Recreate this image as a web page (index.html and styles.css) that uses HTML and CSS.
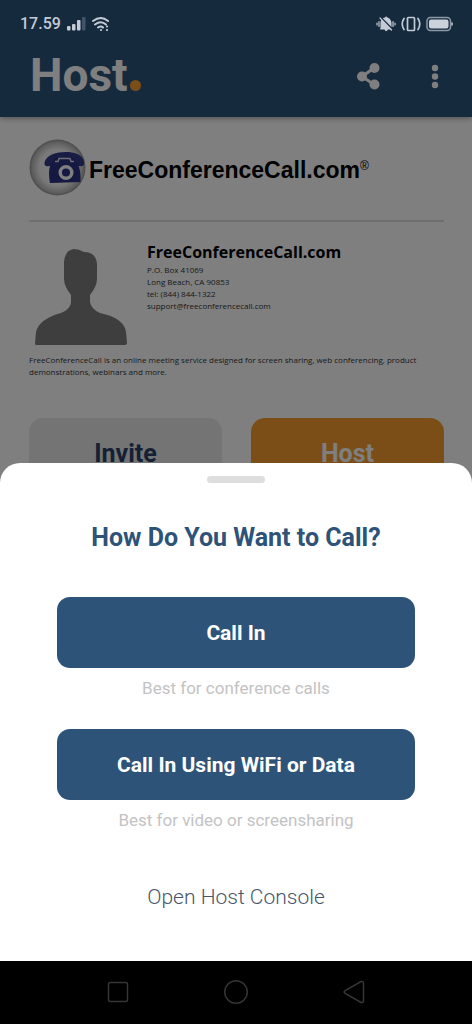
FILE: index.html
```html
<!DOCTYPE html>
<html lang="en">
<head>
<meta charset="utf-8">
<meta name="viewport" content="width=device-width, initial-scale=1">
<title>Host</title>
<link rel="stylesheet" href="styles.css">
</head>
<body>
<div class="stage">
  <div class="status">
    <div class="status-group">
      <span class="clock">17.59</span>
      <svg class="signal" width="20" height="14" viewBox="0 0 20 14" fill="#c3cbd6"><rect x="1" y="9" width="3.500" height="4.500" rx="1"/><rect x="6" y="7" width="3.500" height="6.500" rx="1"/><rect x="11" y="3" width="3.500" height="10.500" rx="1"/><rect x="16" y="0" width="3.500" height="13.500" rx="1" fill="#43546a"/></svg>
      <svg width="20" height="16" viewBox="0 0 20 16" fill="none" stroke="#c3cbd6" stroke-width="2" stroke-linecap="round"><path d="M2 5Q10-1 17 5M4 8.500Q10 4 15 8.500M7 11.500Q10 9.500 12 11.500"/><path d="M10 14h.01M16 10.500h.01M16 14h.01" stroke-width="2.200"/></svg>
    </div>
    <div class="status-group">
      <svg width="20" height="16" viewBox="0 0 20 16"><path d="M4.500 12V6.500Q5 2 9 1.500Q10-.5 11.500 1.500Q15 2.500 15.500 7v5l1 1.500H12Q10 17 8.500 13.500H4z" fill="#c3cbd6"/><path d="M5 1.500l12 12" stroke="#17293e" stroke-width="1.500"/><path d="M4 2l11.500 12M1 7v2M3 5.500v5M17 5.500v5M19 7v2" stroke="#c3cbd6" stroke-width="1.200" stroke-linecap="round"/></svg>
      <svg width="20" height="16" viewBox="0 0 20 16" fill="none" stroke="#c3cbd6" stroke-width="1.700" stroke-linecap="round"><rect x="6.500" y="1.500" width="7" height="13" rx="1"/><path d="M3 2.500Q-.5 8 3 13.500M17 2.500Q20.500 8 17 13.500"/></svg>
      <svg width="27" height="16" viewBox="0 0 27 16"><rect x="1" y="1.500" width="23.500" height="13" rx="3.500" fill="none" stroke="#8e99a8" stroke-width="1.500"/><rect x="3" y="3.500" width="19.500" height="9" rx="2" fill="#ccd2dc"/><path d="M26 6.500v3" stroke="#c3cbd6" stroke-width="1.500"/></svg>
    </div>
  </div>
  <main class="page">
    <header class="bar">
      <h1 class="bar-title">Host<span class="dot"></span></h1>
      <button class="icon-btn" type="button" aria-label="Share"><svg width="24" height="30" viewBox="0 0 24 30"><path d="M17 8L5 16.500l12 8" fill="none" stroke="#fff" stroke-width="3"/><circle cx="5" cy="16.500" r="5" fill="#fff"/><circle cx="17.500" cy="8" r="5" fill="#fff"/><circle cx="17.500" cy="24.500" r="5" fill="#fff"/></svg></button>
      <button class="icon-btn" type="button" aria-label="More options"><svg width="8" height="30" viewBox="0 0 8 30" fill="#fff"><circle cx="4" cy="8" r="3.200"/><circle cx="4" cy="16.500" r="3.200"/><circle cx="4" cy="25" r="3.200"/></svg></button>
    </header>
    <div class="content">
      <div class="brand">
        <svg width="58" height="58" viewBox="0 0 58 58">
          <defs><radialGradient id="orb" cx=".5" cy=".5" r=".5"><stop offset="0" stop-color="#fff"/><stop offset=".65" stop-color="#f2f2f2"/><stop offset=".9" stop-color="#bdbdbd"/><stop offset="1" stop-color="#959595"/></radialGradient></defs>
          <circle cx="28.500" cy="28.500" r="28" fill="url(#orb)"/>
          <path d="M15.500 23.500C18 14 33 12 43 13.500C52 15 56 20 55 26Q51.500 28.500 47 26L46 21H25.500L25 24Q22 28 17 27Q15 26 15.500 23.500Z" fill="#343a86"/>
          <path d="M25 19h20l3 6Q52 29 51.500 43L21 44Q19 33 21 27z" fill="#2b3180"/>
          <path d="M26 22.500H29L30 19.500H41L42 22.500H45" fill="none" stroke="#dcdce8" stroke-width="1.500" stroke-linejoin="round"/>
          <circle cx="37" cy="33.500" r="5.800" fill="#2b3180" stroke="#fff" stroke-width="3.500"/>
        </svg>
        <p class="brand-name">FreeConferenceCall.com<span class="reg">®</span></p>
      </div>
      <section class="profile">
        <svg class="avatar" width="94" height="98" viewBox="0 0 94 98"><path d="M40 1Q45 1 50 4Q62 4 63 16V31Q63 38 56 47V54Q57 61 66 65Q90 70 92 84L93 95Q93 97 91 97H2Q1 97 1 95L2 84Q5 71 27 65Q37 61 37 54V47Q30 38 30 31V14Q31 2 40 1Z" fill="#7d7d7d"/></svg>
        <div>
          <h2 class="profile-name">FreeConferenceCall.com</h2>
          <address class="address">P.O. Box 41069<br>Long Beach, CA 90853<br>tel: (844) 844-1322<br>support@freeconferencecall.com</address>
        </div>
      </section>
      <p class="about">FreeConferenceCall is an online meeting service designed for screen sharing, web conferencing, product demonstrations, webinars and more.</p>
      <div class="actions">
        <button class="action" type="button">Invite</button>
        <button class="action action-host" type="button">Host</button>
      </div>
    </div>
  </main>
  <div class="scrim"></div>
  <section class="sheet" role="dialog" aria-labelledby="sheet-title">
    <div class="handle"></div>
    <h2 class="sheet-title" id="sheet-title">How Do You Want to Call?</h2>
    <button class="call" type="button" aria-describedby="hint-phone">Call In</button>
    <p class="hint" id="hint-phone">Best for conference calls</p>
    <button class="call" type="button" aria-describedby="hint-data">Call In Using WiFi or Data</button>
    <p class="hint" id="hint-data">Best for video or screensharing</p>
    <a class="console" href="#">Open Host Console</a>
  </section>
</div>
<nav class="nav">
  <button class="nav-btn" type="button" aria-label="Recent apps"><svg width="24" height="26" viewBox="0 0 24 26"><rect x="2.500" y="3.500" width="19" height="19" rx="2"/></svg></button>
  <button class="nav-btn" type="button" aria-label="Home"><svg width="24" height="26" viewBox="0 0 24 26"><circle cx="12" cy="13" r="11.300"/></svg></button>
  <button class="nav-btn" type="button" aria-label="Back"><svg width="24" height="26" viewBox="0 0 24 26"><path d="M2.500 12Q1.500 13 2.500 14L19 23.500Q21.500 24 21.500 22V4Q21.500 2 19 2.500Z"/></svg></button>
</nav>
</body>
</html>
```
FILE: styles.css
```css
* { box-sizing: border-box; }
body {
  margin: 0;
  min-height: 100vh;
  display: flex;
  flex-direction: column;
  background: #fff;
  font-family: Roboto, "Liberation Sans", sans-serif;
}
h1, h2, p { margin: 0; }
button { border: 0; padding: 0; background: none; font: inherit; }
svg { display: block; }

.stage { position: relative; flex: 1; display: flex; flex-direction: column; }

.status {
  position: absolute;
  z-index: 2;
  top: 0;
  left: 0;
  right: 0;
  height: 48px;
  padding: 0 19px 0 20px;
  display: flex;
  align-items: center;
  justify-content: space-between;
  color: #c3cbd6;
}
.status-group { display: flex; align-items: center; gap: 5px; }
.clock { font-size: 16px; font-weight: 500; line-height: 20px; }

.bar {
  display: flex;
  align-items: center;
  gap: 50px;
  padding: 45px 33px 12px 30px;
  background: #2d547c;
  box-shadow: 0 1px 6px rgba(0, 0, 0, .4);
}
.bar-title {
  flex: 1;
  display: flex;
  align-items: baseline;
  gap: 2px;
  color: #fff;
  font-size: 46px;
  line-height: 60px;
}
.dot { width: 11px; height: 11px; border-radius: 50%; background: #f69d30; }

.content { padding: 22px 28px 0 29px; }
.brand {
  display: flex;
  align-items: center;
  gap: 2px;
  padding-bottom: 23px;
  border-bottom: 2px solid #dedede;
}
.brand-name { padding-top: 4px; font: bold 23px/32px "Liberation Sans", Arial, sans-serif; }
.reg { font-size: 12px; font-weight: normal; line-height: 12px; vertical-align: 8px; }

.profile { display: flex; gap: 19px; padding: 18px 0 0 5px; }
.avatar { margin-top: 8px; }
.profile-name { font: bold 16px/24px "Open Sans", sans-serif; }
.address, .about { font: 8px/12px "Open Sans", sans-serif; color: #333; }
.about { margin-top: 8px; }

.actions { display: grid; grid-template-columns: 1fr 1fr; gap: 29px; margin-top: 40px; }
.action {
  height: 70px;
  border-radius: 14px;
  background: #e9e9e9;
  color: #2b4168;
  font-size: 25px;
  font-weight: bold;
}
.action-host { background: #f69d30; color: #fff; }

.scrim { position: absolute; inset: 0; background: rgba(0, 0, 0, .5); }

.sheet {
  position: absolute;
  left: 0;
  right: 0;
  bottom: 0;
  padding: 13px 57px 50px;
  display: flex;
  flex-direction: column;
  align-items: center;
  border-radius: 20px 20px 0 0;
  background: #fff;
  text-align: center;
}
.handle { width: 58px; height: 7px; border-radius: 4px; background: #dedede; }
.sheet-title { margin: 38px 0 42px; color: #2d5378; font-size: 25px; line-height: 34px; }
.call {
  width: 100%;
  height: 71px;
  border-radius: 13px;
  background: #2d5378;
  color: #fff;
  font-size: 21px;
  font-weight: bold;
}
.hint { margin: 8px 0 29px; color: #c3c3c3; font-size: 17px; line-height: 24px; }
.console { margin-top: 22px; color: #46566b; font-size: 21px; font-weight: 300; line-height: 28px; text-decoration: none; }

.nav {
  display: flex;
  justify-content: center;
  gap: 94px;
  padding: 18px 0 19px;
  background: #000;
}
.nav-btn svg { fill: none; stroke: #353535; stroke-width: 1.500px; }
```
